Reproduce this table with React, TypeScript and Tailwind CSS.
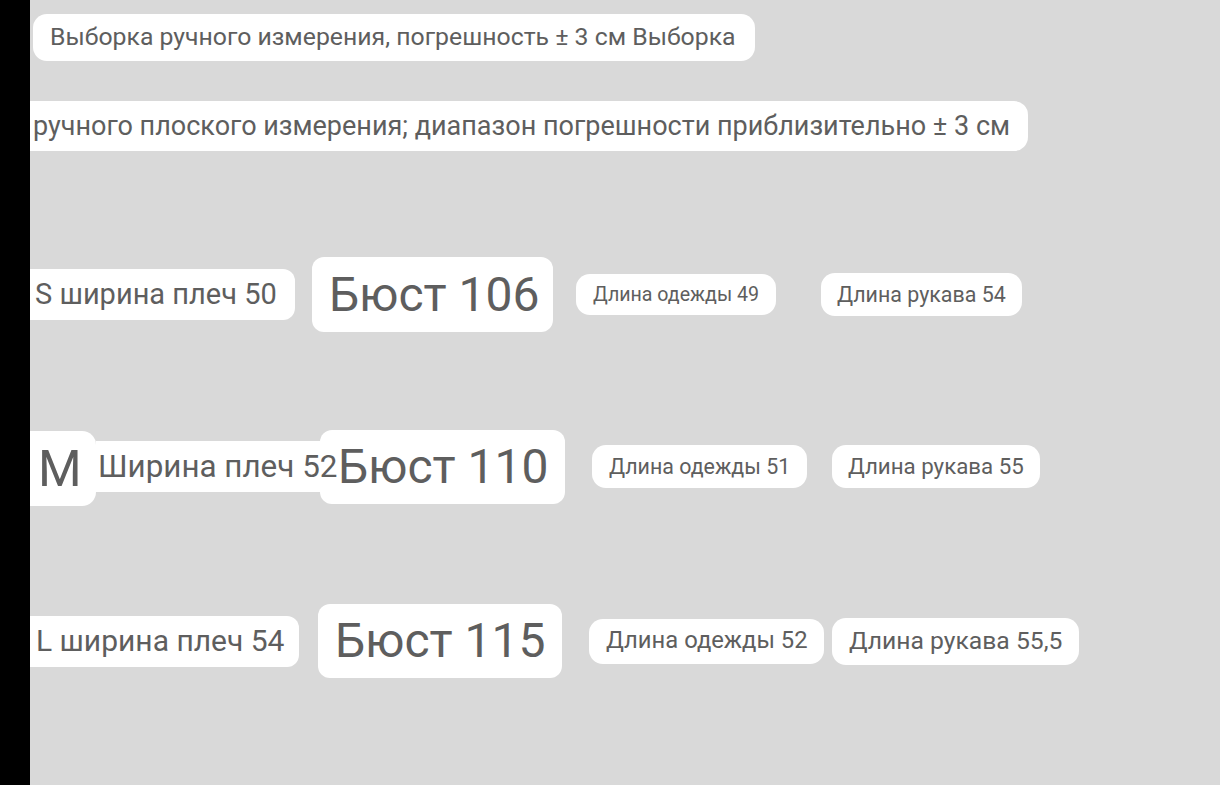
const Tag = ({
  children,
  className,
}: {
  children: React.ReactNode;
  className: string;
}) => (
  <div
    className={`flex items-center shrink-0 bg-white text-[#5e5e5e] whitespace-nowrap leading-none ${className}`}
  >
    {children}
  </div>
);

const App = () => {
  return (
    <div
      className="flex w-[1220px] h-[785px] overflow-hidden"
      style={{ fontFamily: "Roboto, 'Noto Sans', sans-serif" }}
    >
      <div className="w-[30px] shrink-0 bg-black" />
      <div className="flex-1 flex flex-col bg-[#d9d9d9]">
        <div className="flex mt-[14px]">
          <Tag className="ml-[3px] h-[47px] w-[722px] pl-[17px] rounded-[14px] text-[24.8px]">
            Выборка ручного измерения, погрешность ± 3 см Выборка
          </Tag>
        </div>

        <div className="flex mt-[40px]">
          <Tag className="h-[50px] w-[998px] pl-[3px] rounded-r-[14px] text-[27px]">
            ручного плоского измерения; диапазон погрешности приблизительно ± 3 см
          </Tag>
        </div>

        <div className="flex items-center h-[75px] mt-[106px]">
          <Tag className="h-[51px] w-[265px] pl-[5px] rounded-r-[12px] text-[29px]">
            S ширина плеч 50
          </Tag>
          <Tag className="ml-[17px] h-[75px] w-[241px] pl-[17px] rounded-[12px] text-[48px]">
            Бюст 106
          </Tag>
          <Tag className="ml-[23px] h-[41px] w-[200px] pl-[17px] rounded-[14px] text-[19.6px]">
            Длина одежды 49
          </Tag>
          <Tag className="ml-[45px] h-[43px] w-[201px] pl-[16px] rounded-[14px] text-[21.4px]">
            Длина рукава 54
          </Tag>
        </div>

        <div className="flex items-center h-[75px] mt-[97px]">
          <Tag className="self-start mt-[2px] h-[75px] w-[66px] pl-[8px] rounded-r-[14px] text-[50px]">
            M
          </Tag>
          <Tag className="relative z-10 h-[51px] w-[242px] pl-[2px] text-[31.4px]">
            Ширина плеч 52
          </Tag>
          <Tag className="ml-[-18px] h-[74px] w-[245px] pl-[18px] rounded-[12px] text-[48px]">
            Бюст 110
          </Tag>
          <Tag className="ml-[27px] h-[43px] w-[215px] pl-[17px] rounded-[14px] text-[21.4px]">
            Длина одежды 51
          </Tag>
          <Tag className="ml-[25px] h-[43px] w-[208px] pl-[16px] rounded-[14px] text-[22.3px]">
            Длина рукава 55
          </Tag>
        </div>

        <div className="flex items-center h-[74px] mt-[100px]">
          <Tag className="h-[51px] w-[269px] pl-[6px] rounded-r-[12px] text-[30px]">
            L ширина плеч 54
          </Tag>
          <Tag className="ml-[19px] h-[74px] w-[244px] pl-[17px] rounded-[12px] text-[48px]">
            Бюст 115
          </Tag>
          <Tag className="ml-[27px] h-[45px] w-[235px] pl-[17px] rounded-[14px] text-[23.8px]">
            Длина одежды 52
          </Tag>
          <Tag className="ml-[8px] h-[47px] w-[247px] pl-[17px] rounded-[14px] text-[24.7px]">
            Длина рукава 55,5
          </Tag>
        </div>
      </div>
    </div>
  );
};

export default App;
